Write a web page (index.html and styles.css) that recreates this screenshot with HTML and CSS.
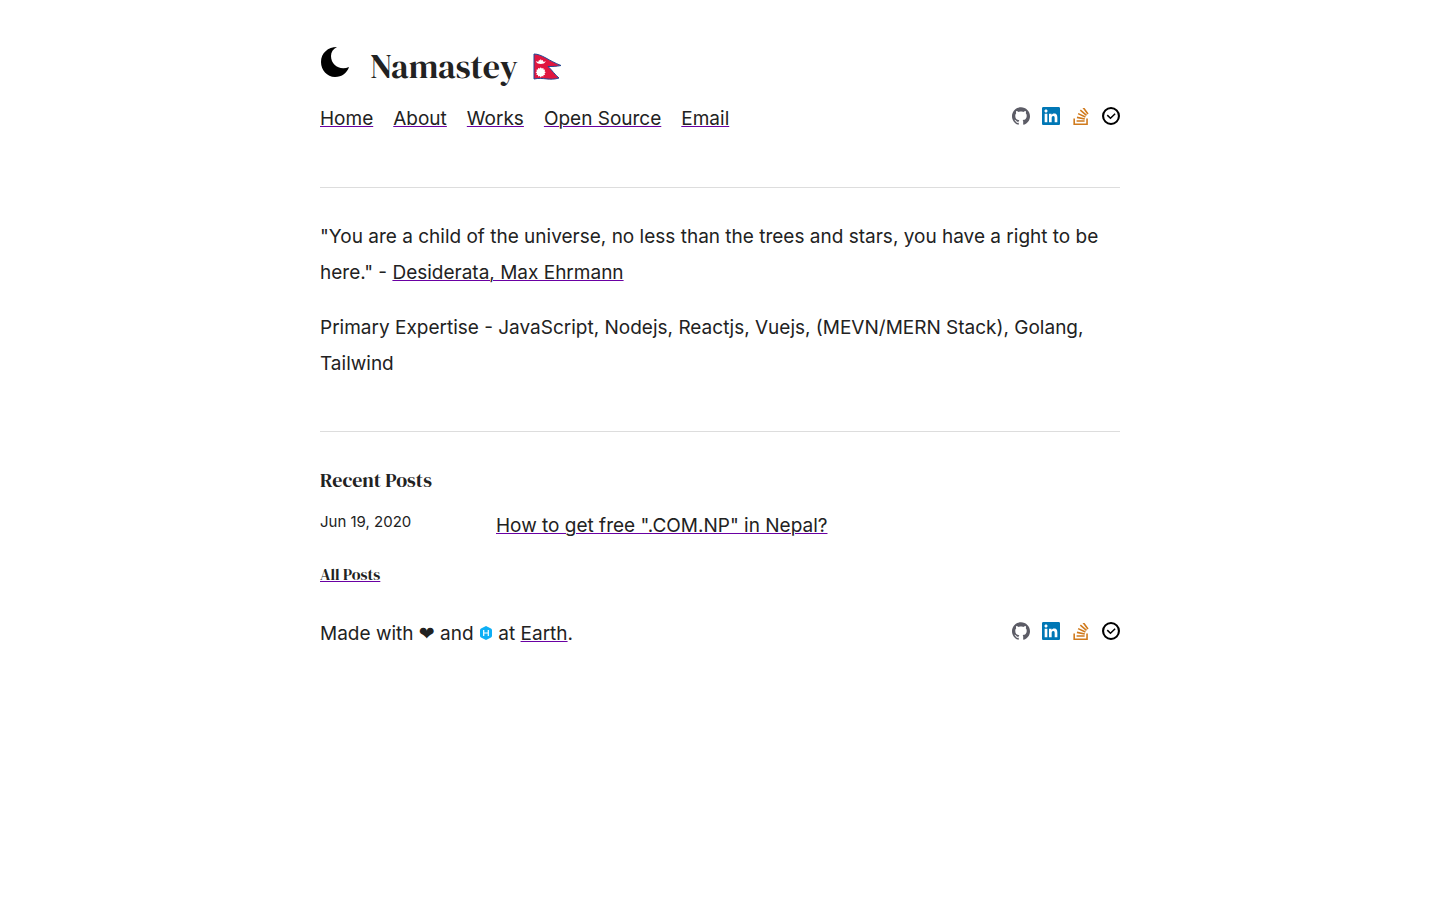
FILE: index.html
```html
<!DOCTYPE html>
<html lang="en">
<head>
<meta charset="utf-8">
<meta name="viewport" content="width=device-width, initial-scale=1">
<title>Namastey</title>
<link rel="stylesheet" href="styles.css">
</head>
<body>
<svg class="sprite" aria-hidden="true">
  <symbol id="github" viewBox="0 0 24 24"><path fill="#5c5c66" d="M12 .297c-6.63 0-12 5.373-12 12 0 5.303 3.438 9.8 8.205 11.385.6.113.82-.258.82-.577 0-.285-.01-1.04-.015-2.04-3.338.724-4.042-1.61-4.042-1.61C4.422 18.07 3.633 17.7 3.633 17.7c-1.087-.744.084-.729.084-.729 1.205.084 1.838 1.236 1.838 1.236 1.07 1.835 2.809 1.305 3.495.998.108-.776.417-1.305.76-1.605-2.665-.3-5.466-1.332-5.466-5.93 0-1.31.465-2.38 1.235-3.22-.135-.303-.54-1.523.105-3.176 0 0 1.005-.322 3.3 1.23.96-.267 1.98-.399 3-.405 1.02.006 2.04.138 3 .405 2.28-1.552 3.285-1.23 3.285-1.23.645 1.653.24 2.873.12 3.176.765.84 1.23 1.91 1.23 3.22 0 4.61-2.805 5.625-5.475 5.92.42.36.81 1.096.81 2.22 0 1.606-.015 2.896-.015 3.286 0 .315.21.69.825.57C20.565 22.092 24 17.592 24 12.297c0-6.627-5.373-12-12-12"/></symbol>
  <symbol id="linkedin" viewBox="0 0 24 24"><path fill="#0077b5" d="M20.447 20.452h-3.554v-5.569c0-1.328-.027-3.037-1.852-3.037-1.853 0-2.136 1.445-2.136 2.939v5.667H9.351V9h3.414v1.561h.046c.477-.9 1.637-1.85 3.37-1.85 3.601 0 4.267 2.37 4.267 5.455v6.286zM5.337 7.433c-1.144 0-2.063-.926-2.063-2.065 0-1.138.92-2.063 2.063-2.063 1.14 0 2.064.925 2.064 2.063 0 1.139-.925 2.065-2.064 2.065zm1.782 13.019H3.555V9h3.564v11.452zM22.225 0H1.771C.792 0 0 .774 0 1.729v20.542C0 23.227.792 24 1.771 24h20.451C23.2 24 24 23.227 24 22.271V1.729C24 .774 23.2 0 22.222 0h.003z"/></symbol>
  <symbol id="stack" viewBox="0 0 24 24"><path fill="#d07a1c" d="M18.986 21.865v-6.404h2.134V24H1.844v-8.539h2.13v6.404h15.012zM6.111 19.731H16.850v-2.137H6.111v2.137zm.259-4.852l10.480 2.189.451-2.070-10.478-2.187-.453 2.068zm1.359-5.056l9.705 4.530.903-1.950-9.706-4.530-.902 1.936v.014zm2.715-4.785l8.217 6.855 1.359-1.620-8.216-6.853-1.360 1.618zM15.751 0l-1.746 1.294 6.405 8.604 1.746-1.294L15.749 0h.002z"/></symbol>
  <symbol id="check" viewBox="0 0 24 24"><g fill="none" stroke="#000"><circle cx="12" cy="12" r="10.6" stroke-width="2.8"/><path stroke-width="2" d="m7 10.800 4.300 4.200 6.200-6"/></g></symbol>
</svg>
<div class="page">
  <header>
    <div class="brand">
      <button class="theme" type="button" aria-label="Toggle dark mode"><svg viewBox="0 0 30 32"><path d="M17 1C8 1 1 7 1 16c0 8 6 15 14 15 7 0 12-4 14-10-9 4-18-2-18-11 0-4 2-7 6-9Z"/></svg></button>
      <h1>Namastey</h1>
      <svg class="flag" viewBox="0 0 30 30" role="img" aria-label="Nepal"><path fill="#e01640" stroke="#234894" stroke-width="1" stroke-linejoin="round" d="M2 2C10 2 17 9 29 13.500c-5 1-9 1-13 1C20 18 23 23 27 26c-9 3-16-1-25 1Z"/><path fill="#fff" d="M3.800 9c1.500 1 2.200.8 2.800.4L6.900 8l1.100.4.8-1.300.8 1.300 1.100-.4.5 1.400c.7.4 1.700.5 2.700-.4-1 2.400-3 3-5.100 3S4.700 11.400 3.800 9Zm5 6.200 1 1.300 1.600-.6.1 1.700 1.700.1-.7 1.500 1.300 1.100-1.300 1 .7 1.500-1.700.2-.1 1.600-1.600-.5-1 1.300-1.100-1.300-1.600.5-.2-1.600-1.600-.2.7-1.500-1.400-1 1.400-1.100-.7-1.500 1.600-.1.2-1.700 1.600.6Z"/></svg>
    </div>
    <div class="bar">
      <nav><a href="#home">Home</a><a href="#about">About</a><a href="#works">Works</a><a href="#source">Open Source</a><a href="#email">Email</a></nav>
      <div class="social">
        <a href="#github" aria-label="GitHub"><svg><use href="#github"/></svg></a>
        <a href="#linkedin" aria-label="LinkedIn"><svg><use href="#linkedin"/></svg></a>
        <a href="#stack" aria-label="Stack Overflow"><svg><use href="#stack"/></svg></a>
        <a href="#check" aria-label="Certifications"><svg><use href="#check"/></svg></a>
      </div>
    </div>
  </header>
  <main>
    <section class="intro">
      <p>"You are a child of the universe, no less than the trees and stars, you have a right to be here." - <a href="#desiderata">Desiderata, Max Ehrmann</a></p>
      <p>Primary Expertise - JavaScript, Nodejs, Reactjs, Vuejs, (MEVN/MERN Stack), Golang, Tailwind</p>
    </section>
    <section class="posts">
      <h2>Recent Posts</h2>
      <article><time datetime="2020-06-19">Jun 19, 2020</time><a href="#post">How to get free ".COM.NP" in Nepal?</a></article>
      <h3><a href="#posts">All Posts</a></h3>
    </section>
  </main>
  <footer class="bar">
    <p>Made with <span class="heart">❤</span> and <svg class="hex" viewBox="0 0 14 16" role="img" aria-label="Hashnode"><path fill="#0eaff5" d="M7 1 12 3.500q1 .5 1 1.700v5.600q0 1.200-1 1.700L7 15 2 12.500q-1-.5-1-1.700V5.200q0-1.200 1-1.700Z"/><path d="M4.700 5v6M9.300 5v6M4.700 8h4.600" fill="none" stroke="#fff" stroke-width="1.200"/></svg> at <a href="#earth">Earth</a>.</p>
    <div class="social">
      <a href="#github" aria-label="GitHub"><svg><use href="#github"/></svg></a>
      <a href="#linkedin" aria-label="LinkedIn"><svg><use href="#linkedin"/></svg></a>
      <a href="#stack" aria-label="Stack Overflow"><svg><use href="#stack"/></svg></a>
      <a href="#check" aria-label="Certifications"><svg><use href="#check"/></svg></a>
    </div>
  </footer>
</div>
</body>
</html>
```
FILE: styles.css
```css
* { box-sizing: border-box; }
body { margin: 0; background: #fff; color: #222; font-family: Inter, "DejaVu Sans", sans-serif; font-size: 19px; line-height: 36px; }
h1, h2, h3, p { margin: 0; }
h1, h2, h3 { font-family: "DM Serif Display", "Liberation Serif", serif; font-weight: 400; }
a { color: inherit; text-decoration: underline #6a00a3 1px; }
.sprite { display: none; }
.page { max-width: 848px; margin: 0 auto; padding: 40px 24px; }
.brand { display: flex; align-items: flex-start; gap: 20px; height: 48px; }
.theme { width: 30px; height: 32px; padding: 0; border: 0; background: none; margin-top: 6px; cursor: pointer; }
.theme svg { display: block; width: 30px; height: 32px; }
h1 { font-size: 34px; line-height: 52px; }
.flag { width: 30px; height: 30px; margin: 12px 0 0 -6px; }
.bar { display: flex; justify-content: space-between; align-items: flex-start; gap: 20px; }
header .bar { padding: 13px 0 50px; }
nav { display: flex; flex-wrap: wrap; gap: 0 20px; }
.social { display: flex; gap: 12px; padding-top: 6px; }
.social a, .social svg { display: block; width: 18px; height: 18px; }
.intro { border: solid #ddd; border-width: 1px 0; padding: 31px 0 49px; }
.intro p + p { margin-top: 19px; }
.posts { padding-top: 34px; }
h2 { font-size: 20px; line-height: 28px; }
article { display: grid; grid-template-columns: 22% 1fr; margin-top: 14px; }
time { font-size: 15px; line-height: 28px; }
h3 { font-size: 16px; line-height: 24px; margin-top: 18px; }
footer { margin-top: 29px; }
footer .social { padding-top: 7px; }
.heart { font-family: "DejaVu Sans", sans-serif; }
.hex { width: 14px; height: 16px; vertical-align: -1px; }
```
